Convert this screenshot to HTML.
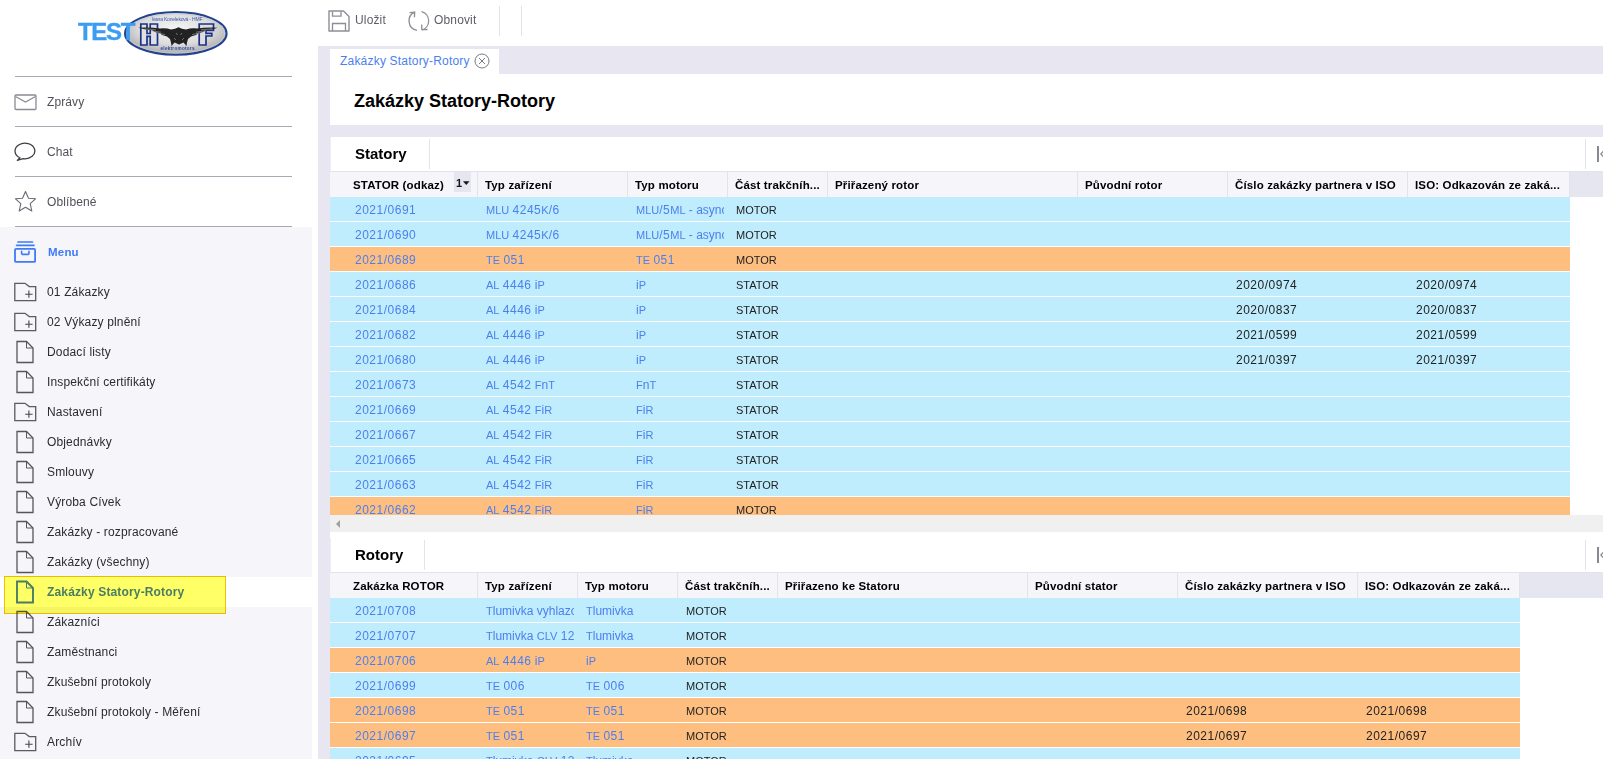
<!DOCTYPE html>
<html><head><meta charset="utf-8">
<style>
*{box-sizing:border-box;margin:0;padding:0}
html,body{width:1603px;height:759px;overflow:hidden;background:#fff;font-family:"Liberation Sans",sans-serif;color:#333}
.abs{position:absolute}
#side{position:absolute;left:0;top:0;width:312px;height:759px;background:#fff}
.sep{position:absolute;left:15px;width:277px;height:1px;background:#a9a9b3}
.si{position:absolute;left:47px;font-size:12px;line-height:14px;color:#50505a;letter-spacing:0.1px;white-space:nowrap}
#menubg{position:absolute;left:0;top:227px;width:312px;height:532px;background:#f5f5fa}
.mi{position:absolute;left:0;width:312px;height:30px}
.mi .t{position:absolute;left:47px;top:8px;font-size:12px;line-height:14px;color:#2b2b33;white-space:nowrap;letter-spacing:0.15px}
.mi svg{position:absolute;left:14px;top:5px}
#main{position:absolute;left:318px;top:46px;width:1285px;height:713px;background:#e8e7f1}
.tb{position:absolute;top:13px;font-size:12px;line-height:14px;color:#5d5d68;letter-spacing:0.15px;white-space:nowrap}
.panel{position:absolute;left:330px;width:1273px;background:#fff}
.ptab{position:absolute;left:25px;top:9px;font-size:15px;font-weight:bold;line-height:16px;color:#000}
.hdr{position:absolute;left:0;top:34px;height:26px;background:#e6e6f0;width:1273px;border-top:1px solid #e3e3ec}
.hc{position:absolute;top:0;height:25px;background:#f5f5fa;border-right:1px solid #e3e3ec;font-size:11.5px;font-weight:bold;color:#000;line-height:26px;padding-left:23px;white-space:nowrap;overflow:hidden;letter-spacing:0.15px}
.row{position:absolute;left:0;height:24px}
.row.b{background:#bfedfd}
.row.o{background:#fdbe80}
.c{position:absolute;top:0;height:24px;line-height:26px;font-size:12px;white-space:nowrap;overflow:hidden;color:#222}
.c .u{font-size:11px}
.c .d{letter-spacing:0.5px}
.c.l{color:#4b7ff0}
</style></head><body>

<div id="side">
  <!-- logo -->
  <svg class="abs" style="left:120px;top:8px" width="110" height="50" viewBox="120 8 110 50">
    <defs><radialGradient id="lg" cx="50%" cy="40%" r="60%"><stop offset="0" stop-color="#f6f6f6"/><stop offset="0.6" stop-color="#dcdcdc"/><stop offset="1" stop-color="#a8a8a8"/></radialGradient></defs>
    <ellipse cx="175.8" cy="33.4" rx="50.8" ry="21.3" fill="url(#lg)" stroke="#23428f" stroke-width="2"/>
    <ellipse cx="175.8" cy="33.4" rx="49" ry="19.6" fill="none" stroke="#c8cbd8" stroke-width="0.8"/>
    <path d="M140.8 24 H147 V33.5 H150.2 V24 H157.5 V45 H150.2 V36.3 H147 V45 H140.8 Z" fill="#e0e0e0" stroke="#1b3288" stroke-width="1.7"/>
    <path d="M199.2 24 H213.5 V30.5 H206 V33.3 H211.8 V36 H206 V45 H199.2 Z" fill="#dedede" stroke="#1b3288" stroke-width="1.7"/>
    <path d="M138 27.8 Q150 27.2 160 28.4 Q166 27.6 171 29.5 L175 28.8 L178.5 27.3 L182 28.8 L186 29.5 Q191 27.6 197 28.4 Q207 27.2 217.7 27.8 L212 29.4 L206 30.2 L203 32 L198 33.2 L196 35 L191 36.5 L188 39 L187 42.5 L186.5 46 L183.5 42.5 L179 44.5 L174.5 42.5 L171.5 46 L171 42.5 L170 39 L167 36.5 L162 35 L160 33.2 L155 32 L152 30.2 L146 29.4 Z" fill="#222"/>
    <path d="M145 28.8 L156 29.8 M151 30.8 L161 32.2 M157 32.8 L165 34.6 M212 28.8 L201 29.8 M206 30.8 L196 32.2 M200 32.8 L192 34.6 M176 33 L177.5 35 M182 33 L180.5 35 M174 38 L176 40 M184 38 L182 40" stroke="#a8a8a8" stroke-width="0.6"/>
    <text x="151.5" y="21.3" font-family="Liberation Sans" font-size="5" fill="#3a58a8" textLength="51">Ivana Koneleková - HMF</text>
    <text x="160.5" y="50.2" font-family="Liberation Sans" font-weight="bold" font-size="4.6" fill="#2a4a9c" textLength="34">elektromotors</text>
  </svg>
  <div class="abs" style="left:78px;top:18px;font-size:24px;font-weight:bold;color:#3b9cf2;line-height:27px;letter-spacing:-1.3px;-webkit-text-stroke:0.35px #3b9cf2">TEST</div>

  <div class="sep" style="top:76px"></div>
  <svg class="abs" style="left:14px;top:94px" width="23" height="17" viewBox="0 0 23 17"><rect x="1" y="1" width="21" height="14.5" rx="1" fill="none" stroke="#8a8a94" stroke-width="1.3"/><path d="M1.5 2.5 L11.5 8 L21.5 2.5" fill="none" stroke="#8a8a94" stroke-width="1.2"/></svg>
  <div class="si" style="top:95px">Zprávy</div>
  <div class="sep" style="top:126px"></div>
  <svg class="abs" style="left:14px;top:142px" width="23" height="20" viewBox="0 0 23 20"><path d="M5.95 15.75 A9.9 7.8 0 1 1 9.18 16.68 L3.3 18.4 Z" fill="none" stroke="#3e3e46" stroke-width="1.3" stroke-linejoin="round"/></svg>
  <div class="si" style="top:145px">Chat</div>
  <div class="sep" style="top:176px"></div>
  <svg class="abs" style="left:14px;top:190px" width="23" height="23" viewBox="0 0 23 23"><path d="M11.5 1.5 L14.5 8.3 L21.5 8.8 L16.2 13.6 L17.8 21 L11.5 17.2 L5.2 21 L6.8 13.6 L1.5 8.8 L8.5 8.3 Z" fill="none" stroke="#6a6a74" stroke-width="1.1" stroke-linejoin="round"/></svg>
  <div class="si" style="top:195px">Oblíbené</div>
  <div class="sep" style="top:226px"></div>

  <div id="menubg"></div>
  <svg class="abs" style="left:14px;top:240px" width="23" height="24" viewBox="0 0 23 24"><path d="M4 2 H18.5 M2.6 5.3 H20" stroke="#3f7bf7" stroke-width="1.7" stroke-linecap="round"/><rect x="1" y="8.9" width="20.1" height="13" rx="1" fill="none" stroke="#3f7bf7" stroke-width="1.8"/><path d="M7.6 11.2 V13.3 Q7.6 14.4 8.7 14.4 H13.9 Q15 14.4 15 13.3 V11.2" fill="none" stroke="#3f7bf7" stroke-width="1.6" stroke-linecap="round"/></svg>
  <div class="abs" style="left:48px;top:245px;font-size:11.5px;font-weight:bold;line-height:14px;color:#3f7bf7;letter-spacing:0.2px">Menu</div>
  <div class="mi" style="top:277px"><svg style="top:5px" width="23" height="20" viewBox="0 0 23 20"><path d="M0.8 1.3 H11 L15.2 4.6 H21.7 V18.6 H0.8 Z" fill="none" stroke="#5a5a63" stroke-width="1.3" stroke-linejoin="miter"/><path d="M11.2 12.2 H18.6 M14.9 8.6 V15.8" stroke="#44444c" stroke-width="1.1"/></svg><div class="t">01 Zákazky</div></div>
<div class="mi" style="top:307px"><svg style="top:5px" width="23" height="20" viewBox="0 0 23 20"><path d="M0.8 1.3 H11 L15.2 4.6 H21.7 V18.6 H0.8 Z" fill="none" stroke="#5a5a63" stroke-width="1.3" stroke-linejoin="miter"/><path d="M11.2 12.2 H18.6 M14.9 8.6 V15.8" stroke="#44444c" stroke-width="1.1"/></svg><div class="t">02 Výkazy plnění</div></div>
<div class="mi" style="top:337px"><svg style="top:3px" width="23" height="24" viewBox="0 0 23 24"><path d="M3 1.5 H12.5 L19 8 V22.5 H3 Z" fill="none" stroke="#55555e" stroke-width="1.3" stroke-linejoin="miter"/><path d="M12.5 1.5 V8 H19" fill="none" stroke="#55555e" stroke-width="1"/></svg><div class="t">Dodací listy</div></div>
<div class="mi" style="top:367px"><svg style="top:3px" width="23" height="24" viewBox="0 0 23 24"><path d="M3 1.5 H12.5 L19 8 V22.5 H3 Z" fill="none" stroke="#55555e" stroke-width="1.3" stroke-linejoin="miter"/><path d="M12.5 1.5 V8 H19" fill="none" stroke="#55555e" stroke-width="1"/></svg><div class="t">Inspekční certifikáty</div></div>
<div class="mi" style="top:397px"><svg style="top:5px" width="23" height="20" viewBox="0 0 23 20"><path d="M0.8 1.3 H11 L15.2 4.6 H21.7 V18.6 H0.8 Z" fill="none" stroke="#5a5a63" stroke-width="1.3" stroke-linejoin="miter"/><path d="M11.2 12.2 H18.6 M14.9 8.6 V15.8" stroke="#44444c" stroke-width="1.1"/></svg><div class="t">Nastavení</div></div>
<div class="mi" style="top:427px"><svg style="top:3px" width="23" height="24" viewBox="0 0 23 24"><path d="M3 1.5 H12.5 L19 8 V22.5 H3 Z" fill="none" stroke="#55555e" stroke-width="1.3" stroke-linejoin="miter"/><path d="M12.5 1.5 V8 H19" fill="none" stroke="#55555e" stroke-width="1"/></svg><div class="t">Objednávky</div></div>
<div class="mi" style="top:457px"><svg style="top:3px" width="23" height="24" viewBox="0 0 23 24"><path d="M3 1.5 H12.5 L19 8 V22.5 H3 Z" fill="none" stroke="#55555e" stroke-width="1.3" stroke-linejoin="miter"/><path d="M12.5 1.5 V8 H19" fill="none" stroke="#55555e" stroke-width="1"/></svg><div class="t">Smlouvy</div></div>
<div class="mi" style="top:487px"><svg style="top:3px" width="23" height="24" viewBox="0 0 23 24"><path d="M3 1.5 H12.5 L19 8 V22.5 H3 Z" fill="none" stroke="#55555e" stroke-width="1.3" stroke-linejoin="miter"/><path d="M12.5 1.5 V8 H19" fill="none" stroke="#55555e" stroke-width="1"/></svg><div class="t">Výroba Cívek</div></div>
<div class="mi" style="top:517px"><svg style="top:3px" width="23" height="24" viewBox="0 0 23 24"><path d="M3 1.5 H12.5 L19 8 V22.5 H3 Z" fill="none" stroke="#55555e" stroke-width="1.3" stroke-linejoin="miter"/><path d="M12.5 1.5 V8 H19" fill="none" stroke="#55555e" stroke-width="1"/></svg><div class="t">Zakázky - rozpracované</div></div>
<div class="mi" style="top:547px"><svg style="top:3px" width="23" height="24" viewBox="0 0 23 24"><path d="M3 1.5 H12.5 L19 8 V22.5 H3 Z" fill="none" stroke="#55555e" stroke-width="1.3" stroke-linejoin="miter"/><path d="M12.5 1.5 V8 H19" fill="none" stroke="#55555e" stroke-width="1"/></svg><div class="t">Zakázky (všechny)</div></div>
<div class="mi" style="top:577px;background:#fff"><svg style="top:3px" width="23" height="24" viewBox="0 0 23 24"><path d="M3 1.5 H12.5 L19 8 V22.5 H3 Z" fill="none" stroke="#4a7df5" stroke-width="1.9" stroke-linejoin="miter"/><path d="M12.5 1.5 V8 H19" fill="none" stroke="#4a7df5" stroke-width="1"/></svg><div class="t" style="color:#4a7df5;font-weight:bold">Zakázky Statory-Rotory</div></div>
<div class="mi" style="top:607px"><svg style="top:3px" width="23" height="24" viewBox="0 0 23 24"><path d="M3 1.5 H12.5 L19 8 V22.5 H3 Z" fill="none" stroke="#55555e" stroke-width="1.3" stroke-linejoin="miter"/><path d="M12.5 1.5 V8 H19" fill="none" stroke="#55555e" stroke-width="1"/></svg><div class="t">Zákazníci</div></div>
<div class="mi" style="top:637px"><svg style="top:3px" width="23" height="24" viewBox="0 0 23 24"><path d="M3 1.5 H12.5 L19 8 V22.5 H3 Z" fill="none" stroke="#55555e" stroke-width="1.3" stroke-linejoin="miter"/><path d="M12.5 1.5 V8 H19" fill="none" stroke="#55555e" stroke-width="1"/></svg><div class="t">Zaměstnanci</div></div>
<div class="mi" style="top:667px"><svg style="top:3px" width="23" height="24" viewBox="0 0 23 24"><path d="M3 1.5 H12.5 L19 8 V22.5 H3 Z" fill="none" stroke="#55555e" stroke-width="1.3" stroke-linejoin="miter"/><path d="M12.5 1.5 V8 H19" fill="none" stroke="#55555e" stroke-width="1"/></svg><div class="t">Zkušební protokoly</div></div>
<div class="mi" style="top:697px"><svg style="top:3px" width="23" height="24" viewBox="0 0 23 24"><path d="M3 1.5 H12.5 L19 8 V22.5 H3 Z" fill="none" stroke="#55555e" stroke-width="1.3" stroke-linejoin="miter"/><path d="M12.5 1.5 V8 H19" fill="none" stroke="#55555e" stroke-width="1"/></svg><div class="t">Zkušební protokoly - Měření</div></div>
<div class="mi" style="top:727px"><svg style="top:5px" width="23" height="20" viewBox="0 0 23 20"><path d="M0.8 1.3 H11 L15.2 4.6 H21.7 V18.6 H0.8 Z" fill="none" stroke="#5a5a63" stroke-width="1.3" stroke-linejoin="miter"/><path d="M11.2 12.2 H18.6 M14.9 8.6 V15.8" stroke="#44444c" stroke-width="1.1"/></svg><div class="t">Archív</div></div>
<div class="abs" style="left:4px;top:576px;width:222px;height:38px;background:#ffff66;border:1px solid #f2c200;mix-blend-mode:multiply"></div>
</div>

<!-- toolbar -->
<svg class="abs" style="left:327px;top:9px" width="24" height="24" viewBox="0 0 24 24"><path d="M2 2 H16.5 L22 7.5 V22 H2 Z" fill="none" stroke="#8d8d96" stroke-width="1.4" stroke-linejoin="round"/><path d="M5.5 2.5 V7.2 H14 V2.5 M5.5 22 V14.5 H18.5 V22" fill="none" stroke="#8d8d96" stroke-width="1.3"/></svg>
<div class="tb" style="left:355px">Uložit</div>
<svg class="abs" style="left:404px;top:8px" width="28" height="26" viewBox="404 8 28 26"><path d="M414.7 12.2 A9.6 9.6 0 0 0 417 30.4" fill="none" stroke="#8d8d96" stroke-width="1.3"/><path d="M421.6 11.6 A9.6 9.6 0 0 1 422 30" fill="none" stroke="#8d8d96" stroke-width="1.3"/><path d="M409.6 12.6 L414.7 12.3 L414.4 17.2 M421.7 24.5 L421.8 29.7 L427.5 29.5" fill="none" stroke="#8d8d96" stroke-width="1.3"/></svg>
<div class="tb" style="left:434px">Obnovit</div>
<div class="abs" style="left:499px;top:6px;width:1px;height:30px;background:#e2e2ea"></div>
<div class="abs" style="left:521px;top:6px;width:1px;height:30px;background:#e2e2ea"></div>

<div id="main"></div>
<!-- tab -->
<div class="abs" style="left:330px;top:49px;width:169px;height:26px;background:#fff"></div>
<div class="abs" style="left:340px;top:54px;font-size:12px;line-height:14px;color:#4b7ff0;letter-spacing:0.2px;white-space:nowrap">Zakázky Statory-Rotory</div>
<svg class="abs" style="left:474px;top:53px" width="16" height="16" viewBox="0 0 16 16"><circle cx="8" cy="8" r="7" fill="none" stroke="#7a7a82" stroke-width="1"/><path d="M5 5 L11 11 M11 5 L5 11" stroke="#7a7a82" stroke-width="1"/></svg>
<!-- title panel -->
<div class="panel" style="top:74px;height:51px"></div>
<div class="abs" style="left:354px;top:91px;font-size:18px;font-weight:bold;line-height:20px;color:#000;white-space:nowrap">Zakázky Statory-Rotory</div>

<!-- statory panel -->
<div class="panel" id="pS" style="top:137px;height:395px;overflow:hidden"><div class="ptab" style="top:9px">Statory</div><div class="abs" style="left:0;top:0px;width:1px;height:34px;background:#ededf3"></div><div class="abs" style="left:99px;top:2px;width:1px;height:30px;background:#e3e3ec"></div><div class="abs" style="left:1255px;top:2px;width:1px;height:30px;background:#e3e3ec"></div><div class="abs" style="left:1267px;top:9px;width:2px;height:16px;background:#88888f"></div><svg class="abs" style="left:1270px;top:13px" width="4" height="8" viewBox="0 0 4 8"><path d="M4 0.5 L0.8 4 L4 7.5" fill="none" stroke="#88888f" stroke-width="1.2"/></svg><div class="hdr" style="top:34px"></div>
<div class="hc" style="left:0px;top:35px;width:148px;padding-left:23px">STATOR (odkaz)</div>
<div class="hc" style="left:148px;top:35px;width:150px;padding-left:7px">Typ zařízení</div>
<div class="hc" style="left:298px;top:35px;width:100px;padding-left:7px">Typ motoru</div>
<div class="hc" style="left:398px;top:35px;width:100px;padding-left:7px">Část trakčníh...</div>
<div class="hc" style="left:498px;top:35px;width:250px;padding-left:7px">Přiřazený rotor</div>
<div class="hc" style="left:748px;top:35px;width:150px;padding-left:7px">Původní rotor</div>
<div class="hc" style="left:898px;top:35px;width:180px;padding-left:7px">Číslo zakázky partnera v ISO</div>
<div class="hc" style="left:1078px;top:35px;width:162px;padding-left:7px">ISO: Odkazován ze zaká...</div>
<div class="abs" style="left:124px;top:35px;width:17px;height:20px;background:#e6e6f0"></div>
<div class="abs" style="left:126px;top:40px;font-size:11px;font-weight:bold;line-height:12px;color:#161616">1</div>
<svg class="abs" style="left:133px;top:44px" width="7" height="5" viewBox="0 0 7 5"><path d="M0 0.3 H6.5 L3.25 4 Z" fill="#161616"/></svg>
<div class="row b" style="top:60px;width:1240px">
<div class="c l" style="left:25px;width:119px"><span class="d">2021/0691</span></div>
<div class="c l" style="left:156px;width:138px"><span class="u">MLU</span> <span class="d">4245</span><span class="u">K</span><span class="d">/6</span></div>
<div class="c l" style="left:306px;width:88px"><span class="u">MLU</span><span class="d">/5</span><span class="u">ML</span> - asynchronní</div>
<div class="c" style="left:406px;width:88px"><span class="u">MOTOR</span></div>
</div>
<div class="row b" style="top:85px;width:1240px">
<div class="c l" style="left:25px;width:119px"><span class="d">2021/0690</span></div>
<div class="c l" style="left:156px;width:138px"><span class="u">MLU</span> <span class="d">4245</span><span class="u">K</span><span class="d">/6</span></div>
<div class="c l" style="left:306px;width:88px"><span class="u">MLU</span><span class="d">/5</span><span class="u">ML</span> - asynchronní</div>
<div class="c" style="left:406px;width:88px"><span class="u">MOTOR</span></div>
</div>
<div class="row o" style="top:110px;width:1240px">
<div class="c l" style="left:25px;width:119px"><span class="d">2021/0689</span></div>
<div class="c l" style="left:156px;width:138px"><span class="u">TE</span> <span class="d">051</span></div>
<div class="c l" style="left:306px;width:88px"><span class="u">TE</span> <span class="d">051</span></div>
<div class="c" style="left:406px;width:88px"><span class="u">MOTOR</span></div>
</div>
<div class="row b" style="top:135px;width:1240px">
<div class="c l" style="left:25px;width:119px"><span class="d">2021/0686</span></div>
<div class="c l" style="left:156px;width:138px"><span class="u">AL</span> <span class="d">4446</span> i<span class="u">P</span></div>
<div class="c l" style="left:306px;width:88px">i<span class="u">P</span></div>
<div class="c" style="left:406px;width:88px"><span class="u">STATOR</span></div>
<div class="c" style="left:906px;width:168px"><span class="d">2020/0974</span></div>
<div class="c" style="left:1086px;width:150px"><span class="d">2020/0974</span></div>
</div>
<div class="row b" style="top:160px;width:1240px">
<div class="c l" style="left:25px;width:119px"><span class="d">2021/0684</span></div>
<div class="c l" style="left:156px;width:138px"><span class="u">AL</span> <span class="d">4446</span> i<span class="u">P</span></div>
<div class="c l" style="left:306px;width:88px">i<span class="u">P</span></div>
<div class="c" style="left:406px;width:88px"><span class="u">STATOR</span></div>
<div class="c" style="left:906px;width:168px"><span class="d">2020/0837</span></div>
<div class="c" style="left:1086px;width:150px"><span class="d">2020/0837</span></div>
</div>
<div class="row b" style="top:185px;width:1240px">
<div class="c l" style="left:25px;width:119px"><span class="d">2021/0682</span></div>
<div class="c l" style="left:156px;width:138px"><span class="u">AL</span> <span class="d">4446</span> i<span class="u">P</span></div>
<div class="c l" style="left:306px;width:88px">i<span class="u">P</span></div>
<div class="c" style="left:406px;width:88px"><span class="u">STATOR</span></div>
<div class="c" style="left:906px;width:168px"><span class="d">2021/0599</span></div>
<div class="c" style="left:1086px;width:150px"><span class="d">2021/0599</span></div>
</div>
<div class="row b" style="top:210px;width:1240px">
<div class="c l" style="left:25px;width:119px"><span class="d">2021/0680</span></div>
<div class="c l" style="left:156px;width:138px"><span class="u">AL</span> <span class="d">4446</span> i<span class="u">P</span></div>
<div class="c l" style="left:306px;width:88px">i<span class="u">P</span></div>
<div class="c" style="left:406px;width:88px"><span class="u">STATOR</span></div>
<div class="c" style="left:906px;width:168px"><span class="d">2021/0397</span></div>
<div class="c" style="left:1086px;width:150px"><span class="d">2021/0397</span></div>
</div>
<div class="row b" style="top:235px;width:1240px">
<div class="c l" style="left:25px;width:119px"><span class="d">2021/0673</span></div>
<div class="c l" style="left:156px;width:138px"><span class="u">AL</span> <span class="d">4542</span> <span class="u">F</span>n<span class="u">T</span></div>
<div class="c l" style="left:306px;width:88px"><span class="u">F</span>n<span class="u">T</span></div>
<div class="c" style="left:406px;width:88px"><span class="u">STATOR</span></div>
</div>
<div class="row b" style="top:260px;width:1240px">
<div class="c l" style="left:25px;width:119px"><span class="d">2021/0669</span></div>
<div class="c l" style="left:156px;width:138px"><span class="u">AL</span> <span class="d">4542</span> <span class="u">F</span>i<span class="u">R</span></div>
<div class="c l" style="left:306px;width:88px"><span class="u">F</span>i<span class="u">R</span></div>
<div class="c" style="left:406px;width:88px"><span class="u">STATOR</span></div>
</div>
<div class="row b" style="top:285px;width:1240px">
<div class="c l" style="left:25px;width:119px"><span class="d">2021/0667</span></div>
<div class="c l" style="left:156px;width:138px"><span class="u">AL</span> <span class="d">4542</span> <span class="u">F</span>i<span class="u">R</span></div>
<div class="c l" style="left:306px;width:88px"><span class="u">F</span>i<span class="u">R</span></div>
<div class="c" style="left:406px;width:88px"><span class="u">STATOR</span></div>
</div>
<div class="row b" style="top:310px;width:1240px">
<div class="c l" style="left:25px;width:119px"><span class="d">2021/0665</span></div>
<div class="c l" style="left:156px;width:138px"><span class="u">AL</span> <span class="d">4542</span> <span class="u">F</span>i<span class="u">R</span></div>
<div class="c l" style="left:306px;width:88px"><span class="u">F</span>i<span class="u">R</span></div>
<div class="c" style="left:406px;width:88px"><span class="u">STATOR</span></div>
</div>
<div class="row b" style="top:335px;width:1240px">
<div class="c l" style="left:25px;width:119px"><span class="d">2021/0663</span></div>
<div class="c l" style="left:156px;width:138px"><span class="u">AL</span> <span class="d">4542</span> <span class="u">F</span>i<span class="u">R</span></div>
<div class="c l" style="left:306px;width:88px"><span class="u">F</span>i<span class="u">R</span></div>
<div class="c" style="left:406px;width:88px"><span class="u">STATOR</span></div>
</div>
<div class="row o" style="top:360px;width:1240px">
<div class="c l" style="left:25px;width:119px"><span class="d">2021/0662</span></div>
<div class="c l" style="left:156px;width:138px"><span class="u">AL</span> <span class="d">4542</span> <span class="u">F</span>i<span class="u">R</span></div>
<div class="c l" style="left:306px;width:88px"><span class="u">F</span>i<span class="u">R</span></div>
<div class="c" style="left:406px;width:88px"><span class="u">MOTOR</span></div>
</div><div class="abs" style="left:0;top:378px;width:1273px;height:17px;background:#f0f0f0"></div><svg class="abs" style="left:5px;top:382px" width="6" height="10" viewBox="0 0 6 10"><path d="M5 1 L1 5 L5 9 Z" fill="#a0a0a0"/></svg></div>
<!-- rotory panel -->
<div class="panel" id="pR" style="top:532px;height:227px;overflow:hidden"><div class="ptab" style="top:15px">Rotory</div><div class="abs" style="left:0;top:6px;width:1px;height:34px;background:#ededf3"></div><div class="abs" style="left:94px;top:8px;width:1px;height:30px;background:#e3e3ec"></div><div class="abs" style="left:1255px;top:8px;width:1px;height:30px;background:#e3e3ec"></div><div class="abs" style="left:1267px;top:15px;width:2px;height:16px;background:#88888f"></div><svg class="abs" style="left:1270px;top:19px" width="4" height="8" viewBox="0 0 4 8"><path d="M4 0.5 L0.8 4 L4 7.5" fill="none" stroke="#88888f" stroke-width="1.2"/></svg><div class="hdr" style="top:40px"></div>
<div class="hc" style="left:0px;top:41px;width:148px;padding-left:23px">Zakázka ROTOR</div>
<div class="hc" style="left:148px;top:41px;width:100px;padding-left:7px">Typ zařízení</div>
<div class="hc" style="left:248px;top:41px;width:100px;padding-left:7px">Typ motoru</div>
<div class="hc" style="left:348px;top:41px;width:100px;padding-left:7px">Část trakčníh...</div>
<div class="hc" style="left:448px;top:41px;width:250px;padding-left:7px">Přiřazeno ke Statoru</div>
<div class="hc" style="left:698px;top:41px;width:150px;padding-left:7px">Původní stator</div>
<div class="hc" style="left:848px;top:41px;width:180px;padding-left:7px">Číslo zakázky partnera v ISO</div>
<div class="hc" style="left:1028px;top:41px;width:162px;padding-left:7px">ISO: Odkazován ze zaká...</div>
<div class="row b" style="top:66px;width:1190px">
<div class="c l" style="left:25px;width:119px"><span class="d">2021/0708</span></div>
<div class="c l" style="left:156px;width:88px"><span class="u">T</span>lumivka vyhlazovací</div>
<div class="c l" style="left:256px;width:88px"><span class="u">T</span>lumivka</div>
<div class="c" style="left:356px;width:88px"><span class="u">MOTOR</span></div>
</div>
<div class="row b" style="top:91px;width:1190px">
<div class="c l" style="left:25px;width:119px"><span class="d">2021/0707</span></div>
<div class="c l" style="left:156px;width:88px"><span class="u">T</span>lumivka <span class="u">CLV</span> <span class="d">12</span></div>
<div class="c l" style="left:256px;width:88px"><span class="u">T</span>lumivka</div>
<div class="c" style="left:356px;width:88px"><span class="u">MOTOR</span></div>
</div>
<div class="row o" style="top:116px;width:1190px">
<div class="c l" style="left:25px;width:119px"><span class="d">2021/0706</span></div>
<div class="c l" style="left:156px;width:88px"><span class="u">AL</span> <span class="d">4446</span> i<span class="u">P</span></div>
<div class="c l" style="left:256px;width:88px">i<span class="u">P</span></div>
<div class="c" style="left:356px;width:88px"><span class="u">MOTOR</span></div>
</div>
<div class="row b" style="top:141px;width:1190px">
<div class="c l" style="left:25px;width:119px"><span class="d">2021/0699</span></div>
<div class="c l" style="left:156px;width:88px"><span class="u">TE</span> <span class="d">006</span></div>
<div class="c l" style="left:256px;width:88px"><span class="u">TE</span> <span class="d">006</span></div>
<div class="c" style="left:356px;width:88px"><span class="u">MOTOR</span></div>
</div>
<div class="row o" style="top:166px;width:1190px">
<div class="c l" style="left:25px;width:119px"><span class="d">2021/0698</span></div>
<div class="c l" style="left:156px;width:88px"><span class="u">TE</span> <span class="d">051</span></div>
<div class="c l" style="left:256px;width:88px"><span class="u">TE</span> <span class="d">051</span></div>
<div class="c" style="left:356px;width:88px"><span class="u">MOTOR</span></div>
<div class="c" style="left:856px;width:168px"><span class="d">2021/0698</span></div>
<div class="c" style="left:1036px;width:150px"><span class="d">2021/0698</span></div>
</div>
<div class="row o" style="top:191px;width:1190px">
<div class="c l" style="left:25px;width:119px"><span class="d">2021/0697</span></div>
<div class="c l" style="left:156px;width:88px"><span class="u">TE</span> <span class="d">051</span></div>
<div class="c l" style="left:256px;width:88px"><span class="u">TE</span> <span class="d">051</span></div>
<div class="c" style="left:356px;width:88px"><span class="u">MOTOR</span></div>
<div class="c" style="left:856px;width:168px"><span class="d">2021/0697</span></div>
<div class="c" style="left:1036px;width:150px"><span class="d">2021/0697</span></div>
</div>
<div class="row b" style="top:216px;width:1190px">
<div class="c l" style="left:25px;width:119px"><span class="d">2021/0695</span></div>
<div class="c l" style="left:156px;width:88px"><span class="u">T</span>lumivka <span class="u">CLV</span> <span class="d">12</span></div>
<div class="c l" style="left:256px;width:88px"><span class="u">T</span>lumivka</div>
<div class="c" style="left:356px;width:88px"><span class="u">MOTOR</span></div>
</div></div>

</body></html>
